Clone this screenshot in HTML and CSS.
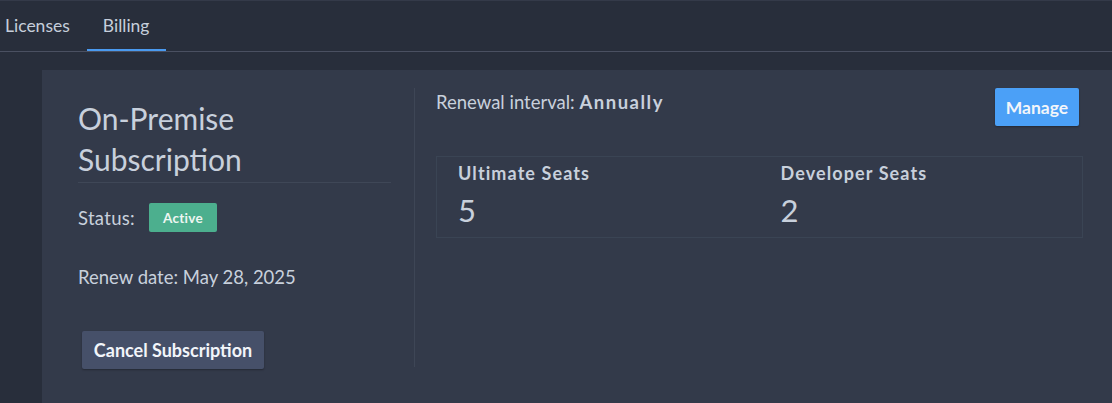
FILE: index.html
```html
<!DOCTYPE html>
<html>
<head>
<meta charset="utf-8">
<link rel="stylesheet" href="styles.css">
</head>
<body>
<div class="page">
  <nav class="tabs">
    <a class="tab">Licenses</a>
    <a class="tab active">Billing</a>
  </nav>
  <div class="content">
    <section class="card">
      <div class="left">
        <h2 class="title">On-Premise Subscription</h2>
        <div class="status-row">
          <span>Status:</span>
          <span class="badge">Active</span>
        </div>
        <div class="renew">Renew date: May 28, 2025</div>
        <button class="btn btn-cancel">Cancel Subscription</button>
      </div>
      <div class="right">
        <div class="right-head">
          <div class="interval">Renewal interval: <b>Annually</b></div>
          <button class="btn btn-manage">Manage</button>
        </div>
        <div class="seats">
          <div class="seat">
            <div class="seat-label">Ultimate Seats</div>
            <div class="seat-value">5</div>
          </div>
          <div class="seat">
            <div class="seat-label">Developer Seats</div>
            <div class="seat-value">2</div>
          </div>
        </div>
      </div>
    </section>
  </div>
</div>
</body>
</html>
```
FILE: styles.css
```css
* { box-sizing: border-box; }
html, body {
  margin: 0;
  padding: 0;
  background: #282e3b;
  overflow: hidden;
}
body {
  font-family: Lato, "Liberation Sans", sans-serif;
  color: #c8d0dc;
  height: 403px;
}
.page {
  border-top: 1px solid #343a49;
}
.tabs {
  display: flex;
  height: 51px;
  border-bottom: 1px solid #4a5061;
  margin-left: -12px;
}
.tab {
  display: flex;
  align-items: center;
  padding: 0 17px;
  font-size: 17.5px;
  color: #c6cedb;
  border-bottom: 2px solid transparent;
  margin-bottom: -1px;
  height: 50px;
}
.tab.active {
  border-bottom-color: #4a9af0;
  padding: 0 17px 0 16px;
}
.content {
  padding: 18px 0 0 42px;
}
.card {
  background: #333a4a;
  display: flex;
  padding: 18px 29px 40px 36px;
  height: 340px;
}
.left {
  width: 337px;
  padding-right: 23px;
  border-right: 1px solid #3e4656;
  height: 279px;
}
.title {
  margin: 0;
  font-weight: 400;
  font-size: 30px;
  line-height: 41px;
  color: #c8d0dc;
  padding: 10px 0 2px;
  border-bottom: 1px solid #3f4757;
}
.status-row {
  display: flex;
  align-items: center;
  gap: 14px;
  margin-top: 20px;
  font-size: 18.5px;
}
.status-row span:first-child {
  letter-spacing: 0.3px;
}
.badge {
  background: #4caf8e;
  color: #eef6f2;
  font-weight: 700;
  font-size: 13.5px;
  letter-spacing: 0.3px;
  border-radius: 2px;
  width: 68px;
  height: 29px;
  display: inline-flex;
  align-items: center;
  justify-content: center;
}
.renew {
  margin-top: 34px;
  font-size: 18.5px;
}
.btn {
  font-family: inherit;
  border: 0;
  border-radius: 2px;
  font-weight: 700;
  color: #f2f5fa;
  font-size: 18px;
  box-shadow: 0 1px 2px rgba(0,0,0,0.3);
  padding: 0;
}
.btn-cancel {
  margin: 43px 0 0 4px;
  background: #465069;
  width: 182px;
  height: 38px;
}
.right {
  flex: 1;
  padding-left: 21px;
}
.right-head {
  display: flex;
  justify-content: space-between;
  align-items: flex-start;
}
.interval {
  font-size: 18.5px;
  margin-top: 3px;
}
.interval b {
  font-weight: 700;
  letter-spacing: 1.5px;
}
.btn-manage {
  background: #4ba0f7;
  width: 84px;
  height: 38px;
  margin-right: 4px;
  font-size: 17.5px;
}
.seats {
  margin-top: 30px;
  border: 1px solid #3a4454;
  display: flex;
  height: 82px;
  padding-top: 5px;
}
.seat {
  flex: 1;
  padding: 0 21px;
}
.seat-label {
  font-weight: 700;
  font-size: 18px;
  letter-spacing: 1.1px;
}
.seat-value {
  font-size: 31px;
  margin-top: 7px;
}
```
